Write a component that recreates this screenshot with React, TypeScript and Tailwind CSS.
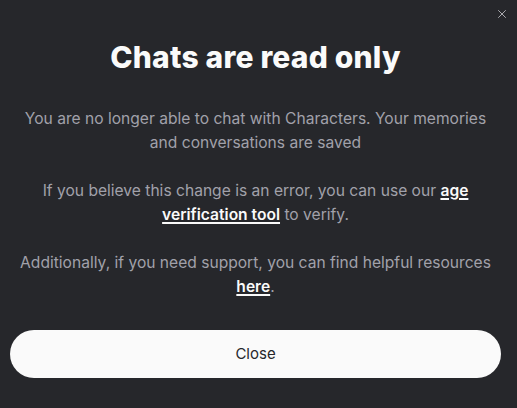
import { X } from "lucide-react";

export default function App() {
  return (
    <div className="relative h-[408px] w-[517px] overflow-hidden bg-[#26272b] font-['Inter',sans-serif]">
      <button className="absolute right-[8px] top-[7px] text-[#b4b4b8]">
        <X className="h-[14px] w-[14px]" strokeWidth={1.6} />
      </button>

      <div className="flex h-full flex-col pl-[10px] pr-[16px]">
        <h1 className="mt-[38px] text-center text-[30px] font-extrabold leading-[38px] tracking-[0.2px] text-[#fafafa]">
          Chats are read only
        </h1>

        <div className="mx-auto mt-[31px] flex w-[482px] flex-col gap-6 text-center text-[15.6px] leading-6 text-[#a1a1aa]">
          <p>
            You are no longer able to chat with Characters. Your memories
            <br />
            and conversations are saved
          </p>
          <p className="px-3">
            If you believe this change is an error, you can use our{" "}
            <a className="font-semibold text-[#fafafa] underline decoration-[1.5px] underline-offset-2">age</a>
            <br />
            <a className="font-semibold text-[#fafafa] underline decoration-[1.5px] underline-offset-2">verification tool</a>{" "}
            to verify.
          </p>
          <p>
            Additionally, if you need support, you can find helpful resources
            <br />
            <a className="font-semibold text-[#fafafa] underline decoration-[1.5px] underline-offset-2">here</a>.
          </p>
        </div>

        <button className="mt-[31px] h-[48px] w-full rounded-full bg-[#fafafa] text-[15px] text-[#26272b]">
          Close
        </button>
      </div>
    </div>
  );
}
